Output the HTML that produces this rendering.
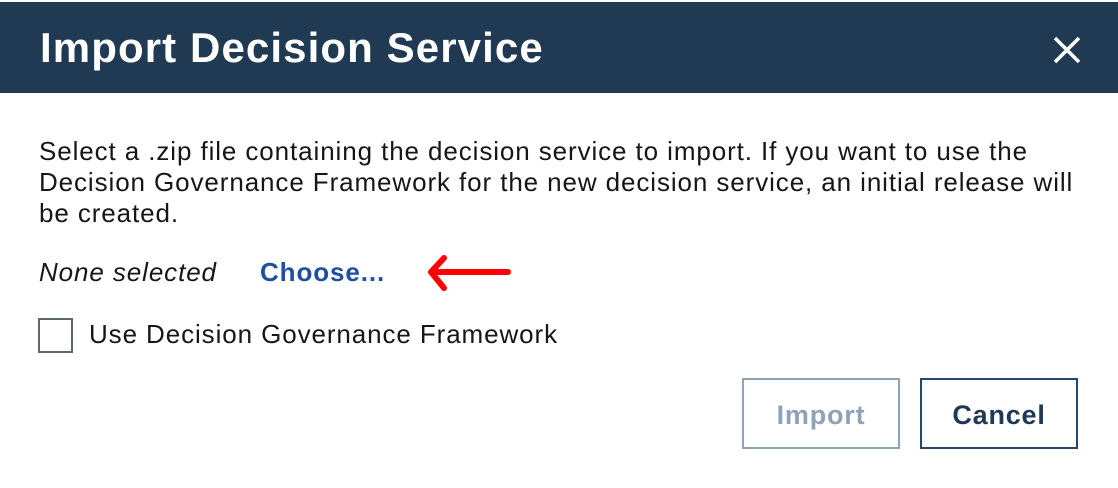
<!DOCTYPE html><html><head><style>
body{margin:0;width:1118px;height:488px;background:#fff;font-family:"Liberation Sans",sans-serif;position:relative;overflow:hidden}
.hd{position:absolute;left:0;top:2px;width:1118px;height:91px;background:#203a53}
.t{position:absolute;left:40px;top:22px;color:#fff;font-weight:bold;font-size:42px;line-height:48px;letter-spacing:1.1px}
.p{position:absolute;left:39px;top:136px;font-size:26px;line-height:31px;color:#161616;width:1040px;letter-spacing:0.9px}
.a{position:absolute;font-size:26px;line-height:30px;letter-spacing:0.9px}
.btn{position:absolute;top:378px;box-sizing:border-box;font-weight:bold;font-size:27px;text-align:center;letter-spacing:0.8px}
</style></head><body>
<div class="hd"><div class="t">Import Decision Service</div>
<svg style="position:absolute;left:1053px;top:34px" width="28" height="28"><path d="M2 2L26 26M26 2L2 26" stroke="#fff" stroke-width="3.5"/></svg></div>
<div class="p">Select a .zip file containing the decision service to import. If you want to use the Decision Governance Framework for the new decision service, an initial release will be created.</div>
<div class="a" style="left:39px;top:257px;font-style:italic;color:#161616">None selected</div>
<div class="a" style="left:260px;top:257px;font-weight:bold;color:#1f4fa0">Choose...</div>
<svg style="position:absolute;left:420px;top:250px" width="100" height="50"><path d="M11 22H88M11 22L24 8M11 22L24 38" stroke="#f00" stroke-width="6" stroke-linecap="round" stroke-linejoin="round" fill="none"/></svg>
<div style="position:absolute;left:38px;top:318px;width:35px;height:35px;box-sizing:border-box;border:2px solid #5d6a6a"></div>
<div class="a" style="left:89px;top:319px;color:#161616">Use Decision Governance Framework</div>
<div class="btn" style="left:742px;border:2px solid #8ea2b8;color:#8ea2b8;width:158px;height:71px;line-height:71px">Import</div>
<div class="btn" style="left:920px;border:2px solid #25476b;color:#203a53;width:158px;height:71px;line-height:71px">Cancel</div>
</body></html>
